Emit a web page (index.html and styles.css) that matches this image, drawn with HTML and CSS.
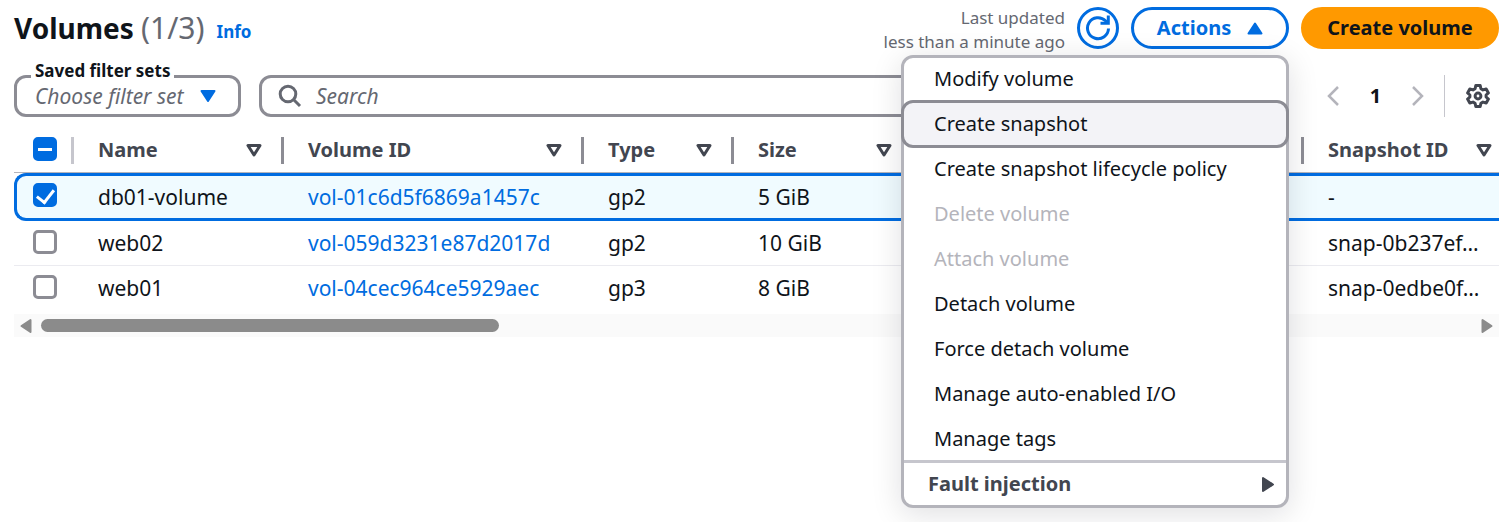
FILE: index.html
```html
<!DOCTYPE html>
<html lang="en">
<head>
<meta charset="utf-8">
<title>Volumes</title>
<link rel="stylesheet" href="styles.css">
</head>
<body>
<main class="page">
  <header class="header">
    <h1 class="title">Volumes <span class="count">(1/3)</span></h1>
    <a class="info" href="#">Info</a>
    <div class="actions">
      <p class="updated">Last updated<br>less than a minute ago</p>
      <button class="btn btn-round" type="button" aria-label="Refresh">
        <svg width="26" height="26" viewBox="0 0 26 26" fill="none" stroke="currentColor" stroke-width="3"><path d="M23.500 13.500A10.500 10.500 0 1 1 20.500 5.800L22.500 8"/><path d="M23.300 0.500V8.300H15.500"/></svg>
      </button>
      <div class="menu-wrap">
        <button class="btn btn-outline" type="button" aria-expanded="true">Actions
          <svg width="16" height="13" viewBox="0 0 16 13"><path d="M8 1.500L14.500 11.500H1.500Z" fill="currentColor" stroke="currentColor" stroke-width="2" stroke-linejoin="round"/></svg>
        </button>
        <div class="menu">
          <ul class="menu-list">
            <li><button class="item" type="button">Modify volume</button></li>
            <li><button class="item item-active" type="button">Create snapshot</button></li>
            <li><button class="item" type="button">Create snapshot lifecycle policy</button></li>
            <li><button class="item" type="button" disabled>Delete volume</button></li>
            <li><button class="item" type="button" disabled>Attach volume</button></li>
            <li><button class="item" type="button">Detach volume</button></li>
            <li><button class="item" type="button">Force detach volume</button></li>
            <li><button class="item" type="button">Manage auto-enabled I/O</button></li>
            <li><button class="item" type="button">Manage tags</button></li>
          </ul>
          <button class="submenu" type="button">Fault injection
            <svg width="14" height="17" viewBox="0 0 14 17"><path d="M2 2V15L12 8.500Z" fill="currentColor" stroke="currentColor" stroke-width="2" stroke-linejoin="round"/></svg>
          </button>
        </div>
      </div>
      <button class="btn btn-primary" type="button">Create volume</button>
    </div>
  </header>

  <div class="filters">
    <div class="filter-set">
      <label class="filter-label" for="filter-set">Saved filter sets</label>
      <select class="filter-select" id="filter-set"><option>Choose filter set</option></select>
      <svg class="filter-caret" width="16" height="14" viewBox="0 0 16 14"><path d="M1.500 2H14.500L8 12Z" fill="currentColor" stroke="currentColor" stroke-width="2" stroke-linejoin="round"/></svg>
    </div>
    <label class="search">
      <svg width="24" height="24" viewBox="0 0 24 24" fill="none" stroke="currentColor" stroke-width="3"><circle cx="10" cy="10" r="7.800"/><path d="M15.500 15.500L22 22"/></svg>
      <input class="search-input" type="search" placeholder="Search" aria-label="Search">
    </label>
    <nav class="pager" aria-label="Pagination">
      <button class="icon-btn arrow" type="button" aria-label="Previous page"><svg width="12" height="20" viewBox="0 0 12 20" fill="none" stroke="currentColor" stroke-width="2.500"><path d="M11 1L2 10L11 19"/></svg></button>
      <button class="icon-btn page-number" type="button">1</button>
      <button class="icon-btn arrow" type="button" aria-label="Next page"><svg width="12" height="20" viewBox="0 0 12 20" fill="none" stroke="currentColor" stroke-width="2.500"><path d="M1 1L10 10L1 19"/></svg></button>
    </nav>
    <button class="icon-btn settings" type="button" aria-label="Preferences">
      <svg width="24" height="24" viewBox="0 0 24 24" fill="none" stroke="currentColor" stroke-width="3" stroke-linejoin="round"><path d="M9.800 1.500H14.200L14.900 4.700L17 5.900L20.200 5L22.400 8.900L20.100 11V13L22.400 15.100L20.200 19L17 18.100L14.900 19.300L14.200 22.500H9.800L9.100 19.300L7 18.100L3.800 19L1.600 15.100L3.900 13V11L1.600 8.900L3.800 5L7 5.900L9.100 4.700Z"/><circle cx="12" cy="12" r="2.900"/></svg>
    </button>
  </div>

  <div class="table-wrap">
    <table class="table">
      <colgroup><col class="c-check"><col class="c-name"><col class="c-id"><col class="c-type"><col class="c-size"><col class="c-more"><col class="c-snap"></colgroup>
      <thead>
        <tr>
          <th><div class="th th-check"><input class="check check-some" type="checkbox" aria-label="Select all"></div></th>
          <th><div class="th">Name<svg class="sort" width="16" height="14" viewBox="0 0 16 14"><path d="M2 2.500H14L8 12Z"/></svg></div></th>
          <th><div class="th">Volume ID<svg class="sort" width="16" height="14" viewBox="0 0 16 14"><path d="M2 2.500H14L8 12Z"/></svg></div></th>
          <th><div class="th">Type<svg class="sort" width="16" height="14" viewBox="0 0 16 14"><path d="M2 2.500H14L8 12Z"/></svg></div></th>
          <th><div class="th">Size<svg class="sort" width="16" height="14" viewBox="0 0 16 14"><path d="M2 2.500H14L8 12Z"/></svg></div></th>
          <th><div class="th"></div></th>
          <th><div class="th">Snapshot ID<svg class="sort" width="16" height="14" viewBox="0 0 16 14"><path d="M2 2.500H14L8 12Z"/></svg></div></th>
        </tr>
      </thead>
      <tbody>
        <tr class="selected">
          <td><input class="check" type="checkbox" aria-label="Select db01-volume" checked></td>
          <td>db01-volume</td><td><a class="link" href="#">vol-01c6d5f6869a1457c</a></td><td>gp2</td><td>5 GiB</td><td></td><td>-</td>
        </tr>
        <tr>
          <td><input class="check" type="checkbox" aria-label="Select web02"></td>
          <td>web02</td><td><a class="link" href="#">vol-059d3231e87d2017d</a></td><td>gp2</td><td>10 GiB</td><td></td><td>snap-0b237ef…</td>
        </tr>
        <tr>
          <td><input class="check" type="checkbox" aria-label="Select web01"></td>
          <td>web01</td><td><a class="link" href="#">vol-04cec964ce5929aec</a></td><td>gp3</td><td>8 GiB</td><td></td><td>snap-0edbe0f…</td>
        </tr>
      </tbody>
    </table>
  </div>
  <div class="scrollbar">
    <svg width="12" height="16" viewBox="0 0 12 16"><path d="M10.500 2V14L1.500 8Z" fill="currentColor" stroke="currentColor" stroke-width="2" stroke-linejoin="round"/></svg>
    <div class="track"><div class="thumb"></div></div>
    <svg width="12" height="16" viewBox="0 0 12 16"><path d="M1.500 2V14L10.500 8Z" fill="currentColor" stroke="currentColor" stroke-width="2" stroke-linejoin="round"/></svg>
  </div>
</main>
</body>
</html>
```

FILE: styles.css
```css
* { box-sizing: border-box; }

body {
  margin: 0;
  background: #fff;
  color: #0f141a;
  font-family: "Noto Sans", "Open Sans", sans-serif;
  font-size: 20px;
  line-height: 28px;
}

button, input, select { font: inherit; color: inherit; }
button { cursor: pointer; }
svg { display: block; flex: none; }

.page { min-height: 100vh; padding: 7px 8px 0 14px; }

.header { display: flex; align-items: center; height: 42px; }
.title { margin: 0; font-size: 28px; line-height: 40px; font-weight: 700; }
.count { color: #656871; font-size: 30px; font-weight: 400; }
.info {
  margin: 8px 0 0 12px;
  color: #006ce0;
  font-size: 17px;
  font-weight: 700;
  text-decoration: none;
}
.actions { display: flex; align-items: center; gap: 12px; margin-left: auto; }
.updated {
  margin: 4px 0 0;
  color: #656871;
  font-size: 17px;
  line-height: 24px;
  text-align: right;
}

.btn {
  display: flex;
  align-items: center;
  justify-content: center;
  gap: 16px;
  height: 42px;
  padding: 0 24px;
  border: 3px solid #006ce0;
  border-radius: 21px;
  background: #fff;
  color: #006ce0;
  font-weight: 700;
  white-space: nowrap;
}
.btn-round { width: 42px; padding: 0; }
.btn-outline { width: 158px; padding: 0 20px; }
.btn-primary { width: 198px; border-color: #ff9900; background: #ff9900; color: #0f141a; }

.menu-wrap { position: relative; }
.menu {
  position: absolute;
  z-index: 2;
  top: 48px;
  right: 0;
  width: 388px;
  border: 3px solid #b4b4bb;
  border-radius: 12px;
  background: #fff;
  box-shadow: 0 6px 30px 1px rgba(0, 7, 22, 0.12);
}
.menu-list { margin: -2px -3px -1px; padding: 0; list-style: none; }
.menu-list li { display: flex; height: 45px; }
.item {
  flex: 1;
  height: 45px;
  padding: 0 30px;
  border: 3px solid transparent;
  border-radius: 12px;
  background: transparent;
  text-align: left;
  white-space: nowrap;
}
.item:disabled { color: #b4b4bb; }
.item-active { height: 48px; margin: -1px 0 -2px; border-color: #8c8c94; background: #f3f3f7; }
.submenu {
  display: flex;
  align-items: center;
  justify-content: space-between;
  width: 100%;
  height: 45px;
  padding: 0 11px 0 24px;
  border: 0;
  border-top: 3px solid #c6c6cd;
  border-radius: 0;
  background: transparent;
  color: #424650;
  font-weight: 700;
}

.filters { display: flex; align-items: center; height: 42px; margin-top: 26px; }
.filter-set { position: relative; width: 227px; margin-right: 18px; }
.filter-label {
  position: absolute;
  top: -16px;
  left: 17px;
  padding: 0 4px;
  background: linear-gradient(#fff, #fff) 0 14px / 100% 6px no-repeat;
  font-size: 17px;
  line-height: 24px;
  font-weight: 700;
}
.filter-select {
  display: block;
  width: 100%;
  height: 42px;
  padding: 0 18px;
  border: 3px solid #8c8c94;
  border-radius: 12px;
  appearance: none;
  background: #fff;
  color: #656871;
  font-size: 21px;
  font-style: italic;
}
.filter-caret { position: absolute; top: 14px; right: 25px; color: #006ce0; pointer-events: none; }
.search {
  display: flex;
  flex: 1;
  align-items: center;
  gap: 14px;
  height: 42px;
  padding: 0 16px;
  border: 3px solid #8c8c94;
  border-radius: 12px;
  color: #656871;
}
.search-input { flex: 1; min-width: 0; padding: 0; border: 0; outline: 0; background: none; font-size: 21px; }
.search-input::placeholder { color: #656871; font-style: italic; opacity: 1; }

.icon-btn { padding: 0; border: 0; background: none; }
.pager { display: flex; align-items: center; gap: 30px; margin: 0 20px 0 60px; }
.arrow { color: #b4b4bb; }
.page-number { width: 13px; font-weight: 700; }
.settings {
  display: flex;
  align-items: center;
  height: 42px;
  padding: 0 9px 0 21px;
  border-left: 1px solid #c6c6cd;
  color: #424650;
}

.table-wrap { margin-top: 11px; overflow: hidden; }
.table { width: 1500px; min-width: 100%; table-layout: fixed; border-collapse: separate; border-spacing: 0; }
.c-check { width: 60px; }
.c-name { width: 210px; }
.c-id { width: 300px; }
.c-type { width: 150px; }
.c-size { width: 180px; }
.c-more { width: 390px; }
.c-snap { width: 210px; }

th { height: 45px; padding: 0; border-bottom: 1px solid #b4b4bb; color: #424650; text-align: left; }
.th {
  display: flex;
  align-items: center;
  justify-content: space-between;
  height: 27px;
  padding: 0 19px 0 24px;
  border-right: 3px solid #8c8c94;
}
.th-check { padding: 0 0 2px 19px; border-color: #c6c6cd; }
.sort { fill: none; stroke: currentColor; stroke-width: 3px; stroke-linejoin: round; }

td { height: 45px; padding: 0 0 0 24px; border-bottom: 1px solid #ebebf0; font-size: 21px; white-space: nowrap; }
td:first-child { padding: 0 0 2px 19px; }
tr:last-child td { height: 44px; border-bottom: 0; }
.selected td { height: 48px; border-top: 3px solid #006ce0; border-bottom: 3px solid #006ce0; background: #f0fbff; }
.selected td:first-child { padding: 0 0 4px 16px; border-left: 3px solid #006ce0; border-radius: 12px 0 0 12px; }
.link { color: #006ce0; text-decoration: none; }

.check {
  display: grid;
  place-items: center;
  width: 24px;
  height: 24px;
  margin: 0;
  border: 3px solid #8c8c94;
  border-radius: 5px;
  appearance: none;
  background: #fff;
}
.check:checked, .check-some { border-color: #006ce0; background: #006ce0; }
.check:checked::before {
  content: "";
  width: 8px;
  height: 14px;
  margin-bottom: 6px;
  border: solid #fff;
  border-width: 0 3px 3px 0;
  transform: rotate(38deg);
}
.check-some::before { content: ""; width: 14px; height: 3px; background: #fff; }

.scrollbar {
  display: flex;
  align-items: center;
  gap: 9px;
  height: 23px;
  margin-top: 4px;
  padding: 0 6px;
  background: #fafafa;
  color: #8b8b8b;
}
.track { flex: 1; }
.thumb { width: 32%; height: 13px; border-radius: 7px; background: #8b8b8b; }
```
